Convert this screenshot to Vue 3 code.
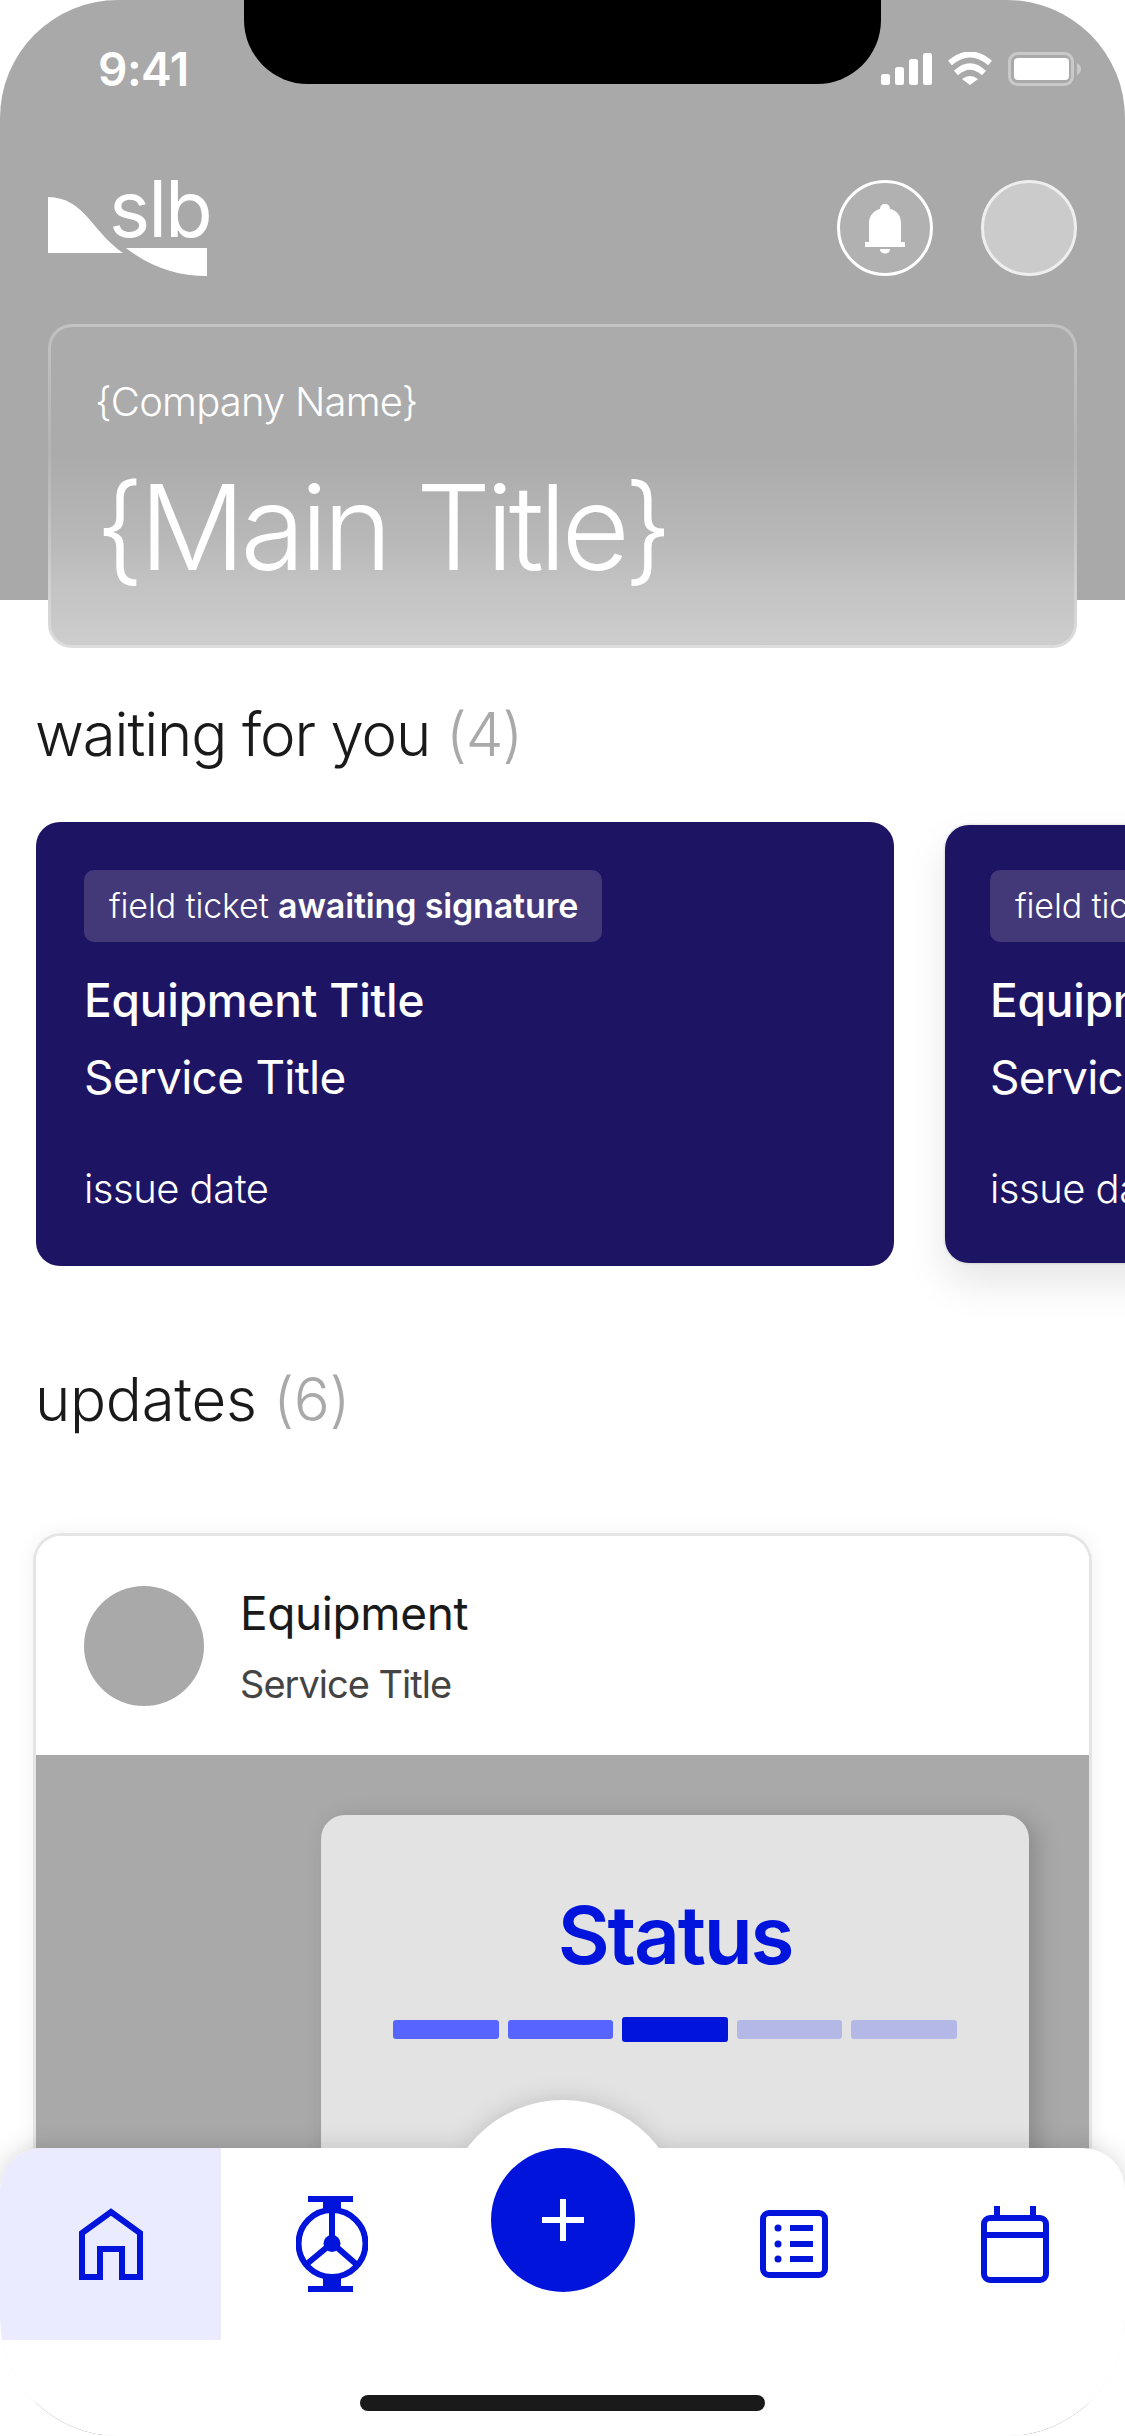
<script setup>
const cards = [
  { id: 1, cls: 'ticket-main' },
  { id: 2, cls: 'ticket-next' },
]
const segments = ['done', 'done', 'now', 'todo', 'todo']
</script>

<template>
  <div class="screen">
    <header class="hero">
      <div class="notch"></div>
      <div class="status">
        <span class="time">9:41</span>
        <svg class="sys" width="200" height="34" viewBox="881 52 200 34">
          <rect x="881" y="74" width="9" height="11" rx="2.5" fill="#fff" />
          <rect x="895" y="67" width="9" height="18" rx="2.5" fill="#fff" />
          <rect x="909" y="59" width="9" height="26" rx="2.5" fill="#fff" />
          <rect x="923" y="53" width="9" height="32" rx="2.5" fill="#fff" />
          <path d="M950 63Q970 46 990 63M956 73Q970 60 984 73" fill="none" stroke="#fff" stroke-width="6" />
          <path d="M962 79Q970 73 978 79L970 85Z" fill="#fff" />
          <rect x="1009.5" y="53.5" width="63" height="31" rx="8" fill="none" stroke="#c9c9c9" stroke-width="3" />
          <rect x="1014" y="58" width="55" height="22" rx="4" fill="#fff" />
          <path d="M1077 63Q1081 65 1081 69Q1081 73 1077 75Z" fill="#c9c9c9" />
        </svg>
      </div>
      <div class="toolbar">
        <svg class="logo" width="164" height="100" viewBox="48 176 164 100">
          <path d="M48 197C66 197 78 206 90 220C100 232 110 244 123 253H48Z" fill="#fff" />
          <path d="M126 248H207V276C178 276 152 268 126 248Z" fill="#fff" />
          <text x="109" y="237" class="logo-word">slb</text>
        </svg>
        <div class="actions">
          <div class="round bell">
            <svg width="40" height="50" viewBox="865 203 40 50">
              <path d="M869 241V222C869 214 875 209 880 208C880 201 890 201 890 208C896 209 901 214 901 222V241Z" fill="#fff" />
              <rect x="865" y="241" width="40" height="5" fill="#fff" />
              <path d="M880 248H890C890 254 880 254 880 248Z" fill="#fff" />
            </svg>
          </div>
          <div class="round avatar"></div>
        </div>
      </div>
      <div class="hero-card">
        <p class="company">{Company Name}</p>
        <h1 class="main-title">{Main Title}</h1>
      </div>
    </header>

    <section>
      <h2 class="section-title first">waiting for you <span class="count">(4)</span></h2>
      <div class="tickets">
        <article v-for="card in cards" :key="card.id" class="ticket" :class="card.cls">
          <div class="chip">field ticket <strong>awaiting signature</strong></div>
          <div class="equipment">Equipment Title</div>
          <div class="service">Service Title</div>
          <div class="issue">issue date</div>
        </article>
      </div>
    </section>

    <section>
      <h2 class="section-title second">updates <span class="count">(6)</span></h2>
      <article class="update">
        <div class="update-head">
          <div class="update-avatar"></div>
          <div>
            <div class="update-equipment">Equipment</div>
            <div class="update-service">Service Title</div>
          </div>
        </div>
        <div class="update-body">
          <div class="status-card">
            <div class="status-title">Status</div>
            <div class="track">
              <span v-for="(seg, i) in segments" :key="i" class="seg" :class="seg"></span>
            </div>
          </div>
        </div>
      </article>
    </section>

    <div class="dock">
      <div class="dock-shape">
        <div class="bump"></div>
        <nav class="bar">
          <div class="tab active">
            <svg width="64" height="72" viewBox="79 2208 64 72">
              <path class="ic" d="M82 2277V2233L111 2212L140 2233V2277H122V2249H100V2277Z" />
            </svg>
          </div>
          <div class="tab">
            <svg width="72" height="96" viewBox="296 2196 72 96">
              <path d="M308 2196H353V2202H341V2212H323V2202H308ZM323 2275H341V2286H353V2292H308V2286H323Z" fill="#0014dc" />
              <circle class="ic" cx="332" cy="2243.5" r="33.5" />
              <circle cx="332" cy="2243.5" r="8.5" fill="#0014dc" />
              <path class="ic" d="M332 2210V2243L308 2263M332 2243L356 2264" />
            </svg>
          </div>
          <div class="tab"></div>
          <div class="tab">
            <svg width="68" height="68" viewBox="759 2210 68 68">
              <rect class="ic" x="762" y="2213" width="62" height="62" rx="6" />
              <circle cx="777" cy="2228" r="3.5" fill="#0014dc" />
              <circle cx="777" cy="2244" r="3.5" fill="#0014dc" />
              <circle cx="777" cy="2259" r="3.5" fill="#0014dc" />
              <path class="ic" d="M789 2228H812M789 2244H812M789 2259H812" />
            </svg>
          </div>
          <div class="tab">
            <svg width="68" height="77" viewBox="980 2205 68 77">
              <rect class="ic" x="983" y="2217" width="62" height="62" rx="6" />
              <path class="ic" d="M983 2234H1045M996 2205V2217M1032 2205V2217" />
            </svg>
          </div>
        </nav>
      </div>
      <button class="fab" type="button">
        <svg width="42" height="42" viewBox="0 0 42 42">
          <path d="M21 0V42M0 21H42" stroke="#fff" stroke-width="6" fill="none" />
        </svg>
      </button>
      <div class="home-indicator"></div>
    </div>
  </div>
</template>

<style>
html, body { margin: 0; background: #fff; }
</style>

<style scoped>
.screen {
  position: relative;
  width: 1125px;
  height: 2436px;
  overflow: hidden;
  border-radius: 118px;
  background: #fff;
  font-family: Inter, "Liberation Sans", sans-serif;
  color: #1a1a1a;
}
.hero {
  position: relative;
  height: 600px;
  background: #a9a9a9;
  display: flow-root;
}
.notch {
  position: absolute;
  left: 244px;
  top: 0;
  width: 637px;
  height: 84px;
  background: #000;
  border-radius: 0 0 64px 64px;
}
.status {
  display: flex;
  justify-content: space-between;
  align-items: center;
  height: 34px;
  margin-top: 52px;
  padding: 0 44px 0 98px;
}
.time {
  color: #fff;
  font-size: 46px;
  font-weight: 600;
  line-height: 34px;
  letter-spacing: -0.5px;
}
.sys { display: block; }
.toolbar {
  display: flex;
  justify-content: space-between;
  align-items: flex-end;
  margin-top: 90px;
  padding: 0 48px;
}
.logo { display: block; overflow: visible; }
.logo-word {
  font-family: Inter, "Liberation Sans", sans-serif;
  font-size: 78px;
  font-weight: 400;
  letter-spacing: -2px;
  fill: #fff;
}
.actions { display: flex; gap: 48px; }
.round {
  width: 96px;
  height: 96px;
  box-sizing: border-box;
  border-radius: 50%;
  display: flex;
  align-items: center;
  justify-content: center;
}
.bell { background: #b1b1b1; border: 3px solid #fff; }
.bell svg { margin-top: 1px; }
.avatar { background: #cbcbcb; border: 3px solid #eeeeee; }
.hero-card {
  box-sizing: border-box;
  height: 324px;
  margin: 48px 48px 0;
  padding: 51px 44px 0;
  border: 3px solid transparent;
  border-radius: 24px;
  background:
    linear-gradient(180deg, #ababab 0%, #ababab 40%, #b7b7b7 65%, #c4c4c4 83%, #cdcdcd 100%) padding-box,
    linear-gradient(180deg, #c2c2c2 0%, #b4b4b4 40%, #dddddd 100%) border-box;
  color: #fff;
}
.company {
  margin: 0;
  font-size: 40px;
  line-height: 48px;
  font-weight: 300;
  letter-spacing: -0.8px;
}
.main-title {
  margin: 36px 0 0;
  font-size: 118px;
  line-height: 130px;
  font-weight: 300;
  letter-spacing: -4.9px;
  white-space: nowrap;
}
.section-title {
  margin: 0 0 0 35px;
  font-size: 60px;
  line-height: 72px;
  font-weight: 300;
}
.section-title.first { margin-top: 98px; margin-bottom: 52px; letter-spacing: -1.15px; }
.section-title.second { margin-top: 97px; margin-bottom: 98px; letter-spacing: -0.3px; }
.count { color: #a9a9a9; }
.tickets {
  display: flex;
  align-items: center;
  gap: 51px;
  padding-left: 36px;
  height: 444px;
}
.ticket {
  flex: none;
  box-sizing: border-box;
  width: 858px;
  background: #1e1464;
  border-radius: 24px;
  color: #fff;
}
.ticket-main { height: 444px; padding: 48px; }
.ticket-next {
  height: 438px;
  padding: 45px;
  box-shadow: 0 20px 40px rgba(0, 0, 0, 0.1), 0 0 3px rgba(0, 0, 0, 0.2);
}
.chip {
  box-sizing: border-box;
  width: 518px;
  height: 72px;
  padding-left: 25px;
  background: #433878;
  border-radius: 10px;
  font-size: 34px;
  line-height: 72px;
  font-weight: 300;
  letter-spacing: -0.15px;
  white-space: nowrap;
}
.chip strong { font-weight: 600; }
.equipment {
  margin-top: 30px;
  font-size: 46px;
  line-height: 56px;
  font-weight: 500;
  letter-spacing: -0.2px;
  white-space: nowrap;
}
.service {
  margin-top: 21px;
  font-size: 46px;
  line-height: 56px;
  font-weight: 400;
  letter-spacing: -0.75px;
  white-space: nowrap;
}
.issue {
  margin-top: 60px;
  font-size: 40px;
  line-height: 48px;
  font-weight: 300;
  letter-spacing: -0.5px;
  white-space: nowrap;
}
.update {
  box-sizing: border-box;
  width: 1059px;
  margin-left: 33px;
  border: 3px solid #e5e5e5;
  border-bottom: 0;
  border-radius: 28px 28px 0 0;
  overflow: hidden;
  box-shadow: 0 0 20px rgba(0, 0, 0, 0.06);
}
.update-head {
  display: flex;
  align-items: center;
  gap: 36px;
  height: 219px;
  padding-left: 48px;
  background: #fff;
}
.update-avatar {
  width: 120px;
  height: 120px;
  border-radius: 50%;
  background: #a9a9a9;
}
.update-equipment {
  font-size: 46px;
  line-height: 56px;
  font-weight: 400;
  letter-spacing: -0.4px;
}
.update-service {
  margin-top: 20px;
  font-size: 38px;
  line-height: 46px;
  font-weight: 400;
  letter-spacing: -1px;
  color: #444;
}
.update-body {
  background: #a9a9a9;
  padding: 60px 60px 0 285px;
}
.status-card {
  box-sizing: border-box;
  height: 620px;
  padding-top: 72px;
  background: #e3e3e3;
  border-radius: 24px 24px 0 0;
  box-shadow: 8px 4px 24px rgba(0, 0, 0, 0.18);
}
.status-title {
  text-align: center;
  color: #0014dc;
  font-size: 80px;
  line-height: 96px;
  font-weight: 600;
  letter-spacing: -2.2px;
}
.track {
  display: flex;
  justify-content: center;
  align-items: center;
  gap: 9px;
  height: 25px;
  margin-top: 34px;
}
.seg { width: 105.6px; height: 19px; border-radius: 3px; }
.seg.done { background: #5864ff; }
.seg.now { background: #0014dc; height: 25px; }
.seg.todo { background: #b3b8e6; }
.dock {
  position: absolute;
  left: 0;
  right: 0;
  bottom: 0;
  height: 336px;
}
.dock-shape {
  position: absolute;
  inset: 0;
  filter: drop-shadow(0 0 12px rgba(0, 0, 0, 0.16));
}
.bump {
  position: absolute;
  left: 442.5px;
  top: 0;
  width: 240px;
  height: 240px;
  border-radius: 50%;
  background: #fff;
}
.bar {
  position: absolute;
  left: 0;
  right: 0;
  top: 48px;
  bottom: 0;
  display: grid;
  grid-template-columns: 221px 221px 1fr 221px 221px;
  grid-template-rows: 192px;
  background: #fff;
  border-radius: 42px 42px 118px 118px;
  overflow: hidden;
}
.tab {
  display: flex;
  align-items: center;
  justify-content: center;
}
.tab svg { display: block; }
.tab.active { background: #ebebff; }
.ic {
  fill: none;
  stroke: #0014dc;
  stroke-width: 6;
}
.fab {
  position: absolute;
  left: 490.5px;
  top: 48px;
  width: 144px;
  height: 144px;
  padding: 0;
  border: 0;
  border-radius: 50%;
  background: #0014dc;
  display: flex;
  align-items: center;
  justify-content: center;
}
.fab svg { display: block; }
.home-indicator {
  position: absolute;
  left: 360px;
  top: 295px;
  width: 405px;
  height: 16px;
  border-radius: 8px;
  background: #1a1a1a;
}
</style>
